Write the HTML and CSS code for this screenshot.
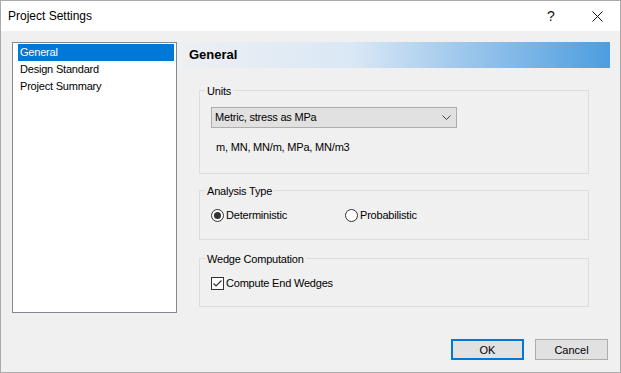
FILE: index.html
```html
<!DOCTYPE html>
<html lang="en">
<head>
  <meta charset="UTF-8" />
  <title>Project Settings</title>
  <link rel="stylesheet" href="styles.css">
</head>
<body>
  <div class="window">
    <div class="titlebar">
      <span class="title">Project Settings</span>
      <span class="caption-btn help">?</span>
      <span class="caption-btn close">
        <svg width="11" height="11" viewBox="0 0 11 11"><path d="M0.5 0.5 L10.5 10.5 M10.5 0.5 L0.5 10.5" stroke="#111" stroke-width="1" fill="none"/></svg>
      </span>
    </div>

    <div class="content">
      <div class="main">
        <ul class="nav-list">
          <li class="selected">General</li>
          <li>Design Standard</li>
          <li>Project Summary</li>
        </ul>

        <div class="panel">
          <div class="panel-header">General</div>

          <div class="group units">
            <div class="group-title">Units</div>
            <div class="combo">
              <span>Metric, stress as MPa</span>
              <svg width="9" height="5" viewBox="0 0 9 5"><path d="M0.5 0.5 L4.5 4.5 L8.5 0.5" stroke="#444" stroke-width="1" fill="none"/></svg>
            </div>
            <div class="units-text">m, MN, MN/m, MPa, MN/m3</div>
          </div>

          <div class="group analysis">
            <div class="group-title">Analysis Type</div>
            <div class="option-row">
              <label class="option first">
                <svg width="13" height="13" viewBox="0 0 13 13"><circle cx="6.5" cy="6.5" r="6" fill="#fff" stroke="#333"/><circle cx="6.5" cy="6.5" r="3.5" fill="#333"/></svg>
                Deterministic
              </label>
              <label class="option">
                <svg width="13" height="13" viewBox="0 0 13 13"><circle cx="6.5" cy="6.5" r="6" fill="#fff" stroke="#333"/></svg>
                Probabilistic
              </label>
            </div>
          </div>

          <div class="group wedge">
            <div class="group-title">Wedge Computation</div>
            <div class="option-row">
              <label class="option">
                <svg width="13" height="13" viewBox="0 0 13 13"><rect x="0.5" y="0.5" width="12" height="12" fill="#fff" stroke="#333"/><path d="M2.5 6.5 L5 9 L10.5 3.5" stroke="#333" stroke-width="1.2" fill="none"/></svg>
                Compute End Wedges
              </label>
            </div>
          </div>
        </div>
      </div>

      <div class="footer">
        <button class="btn default">OK</button>
        <button class="btn">Cancel</button>
      </div>
    </div>
  </div>
</body>
</html>
```

FILE: styles.css
```css
body {
  margin: 0;
  font-family: "Liberation Sans", Arial, sans-serif;
  font-size: 11px;
  color: #000;
  background: #fff;
}

.window {
  width: 621px;
  height: 373px;
  box-sizing: border-box;
  border: 1px solid #aaa;
  display: flex;
  flex-direction: column;
}

.titlebar {
  height: 30px;
  background: #fff;
  display: flex;
  align-items: center;
}

.title {
  flex: 1;
  padding-left: 7px;
  font-size: 12px;
  line-height: 30px;
}

.caption-btn {
  width: 46px;
  height: 30px;
  display: flex;
  align-items: center;
  justify-content: center;
}

.help {
  font-size: 14px;
  color: #111;
}

.content {
  flex: 1;
  background: #f0f0f0;
  display: flex;
  flex-direction: column;
}

.main {
  display: flex;
  padding: 11px 10px 0 11px;
  letter-spacing: -0.2px;
}

.nav-list {
  list-style: none;
  margin: 0;
  padding: 1px 2px 0 5px;
  width: 165px;
  height: 271px;
  box-sizing: border-box;
  border: 1px solid #828790;
  background: #fff;
}

.nav-list li {
  height: 17px;
  line-height: 17px;
  padding-left: 2px;
}

.nav-list li.selected {
  background: #0078d7;
  color: #fff;
}

.panel {
  width: 427px;
  margin-left: 6px;
  display: flex;
  flex-direction: column;
}

.panel-header {
  height: 26px;
  line-height: 26px;
  padding-left: 6px;
  font-size: 13px;
  font-weight: bold;
  letter-spacing: 0;
  background: linear-gradient(to right, #edeff2 0%, #d9e8f5 40%, #93c2ea 70%, #4d9de0 100%);
}

.group {
  margin-left: 16px;
  width: 390px;
  box-sizing: border-box;
  border: 1px solid #dcdcdc;
  display: flex;
  flex-direction: column;
  align-items: flex-start;
  padding: 0 11px;
}

.group-title {
  margin: -6px 0 0 -6px;
  padding: 0 2px;
  line-height: 13px;
  background: #f0f0f0;
}

.units {
  margin-top: 22px;
  padding-bottom: 19px;
}

.analysis {
  margin-top: 16px;
  padding-bottom: 17px;
}

.wedge {
  margin-top: 18px;
  padding-bottom: 16px;
}

.combo {
  margin-top: 9px;
  width: 246px;
  height: 21px;
  box-sizing: border-box;
  border: 1px solid #adadad;
  background: #e1e1e1;
  display: flex;
  align-items: center;
  justify-content: space-between;
  padding: 0 5px 0 3px;
  line-height: 19px;
}

.units-text {
  margin: 13px 0 0 5px;
  line-height: 13px;
}

.option-row {
  margin-top: 11px;
  display: flex;
  line-height: 13px;
}

.option {
  display: flex;
  align-items: center;
  gap: 2px;
}

.option.first {
  width: 134px;
}

.footer {
  margin-top: auto;
  display: flex;
  justify-content: flex-end;
  gap: 11px;
  padding: 0 12px 12px 0;
}

.btn {
  width: 73px;
  height: 21px;
  box-sizing: border-box;
  border: 1px solid #adadad;
  background: #e1e1e1;
  font-family: "Liberation Sans", Arial, sans-serif;
  font-size: 11px;
  color: #000;
  padding: 0;
}

.btn.default {
  border: 2px solid #0078d7;
}
```
